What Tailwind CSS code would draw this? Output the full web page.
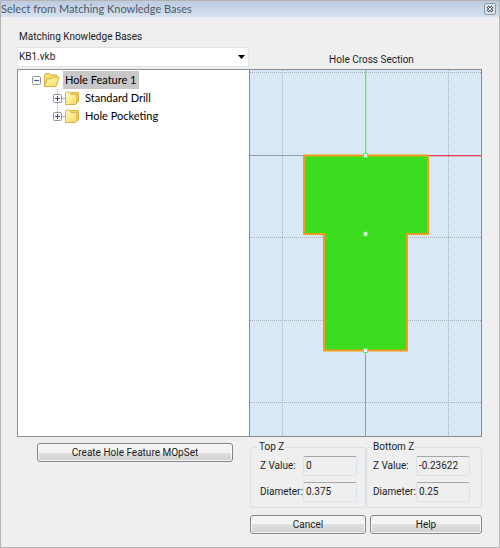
<!DOCTYPE html>
<html lang="en">
<head>
<meta charset="utf-8">
<title>Select from Matching Knowledge Bases</title>
<script src="https://cdn.jsdelivr.net/npm/@tailwindcss/browser@4"></script>
</head>
<body class="bg-[#efefef] text-[#1c1c1c] font-[Roboto,'Liberation_Sans',sans-serif] text-[10px] leading-[14px]">
<svg class="absolute size-0" aria-hidden="true">
  <defs>
    <linearGradient id="gold" x1="0" y1="0" x2="1" y2="1"><stop offset="0" stop-color="#fffac8"/><stop offset="1" stop-color="#f8d85c"/></linearGradient>
    <symbol id="folder" viewBox="0 0 16 16">
      <path d="M7 4.500V2.500h7.500v9l-1.500 1.500" fill="#f4d768" stroke="#d9b24a"/>
      <path d="M1.500 13.500V3l1-1h3l1.500 2.500h6v8.500l-1.500 1.500h-10z" fill="url(#gold)" stroke="#dbb03a"/>
    </symbol>
    <symbol id="folder-open" viewBox="0 0 17 16">
      <path d="M1.500 14V3l1-1.500h4L8 3h5.500v4z" fill="#f7dc72" stroke="#d9b24a"/>
      <path d="M1.500 14.500 4 7l5-.5L10.500 5h5.500l-3 9.500z" fill="url(#gold)" stroke="#dbb03a"/>
    </symbol>
    <symbol id="minus" viewBox="0 0 9 9"><rect x=".5" y=".5" width="8" height="8" rx="1" fill="#f8f8f8" stroke="#959595"/><path d="M2 4.500h5" stroke="#3c50a0"/></symbol>
    <symbol id="plus" viewBox="0 0 9 9"><rect x=".5" y=".5" width="8" height="8" rx="1" fill="#f8f8f8" stroke="#959595"/><path d="M2 4.500h5M4.500 2v5" stroke="#3c50a0"/></symbol>
  </defs>
</svg>
<div class="min-h-screen flex flex-col border border-[#b4b4b4]">
  <header class="h-4 flex items-center justify-between pr-[3px] bg-linear-to-b from-[#bccbdf] to-[#d6e2f0]">
    <h1 class="font-[Lato,'Open_Sans',sans-serif] text-[11px] leading-4 text-[#505a66]">Select from Matching Knowledge Bases</h1>
    <button aria-label="Close" class="block">
      <svg class="block size-3" viewBox="0 0 12 12"><rect x=".5" y=".5" width="11" height="11" rx="1.500" fill="#dce4ee" stroke="#8b97ae"/><path d="m3.500 3.500 5 5m0-5-5 5" stroke="#555b68" stroke-width="3"/><path d="m3.500 3.500 5 5m0-5-5 5" stroke="#fff"/></svg>
    </button>
  </header>

  <main class="flex-1 flex flex-col pl-4 pr-[17px] pt-3 pb-[13px]">
    <div class="grid grid-cols-[232fr_233fr] items-end pb-[2px]">
      <div>
        <label for="kb" class="block pl-[2px] pt-[1px] pb-[3px]">Matching Knowledge Bases</label>
        <div class="relative">
          <select id="kb" class="block appearance-none w-full h-5 pl-[1px] bg-white border border-[#e2e3e8] rounded-none"><option>KB1.vkb</option></select>
          <svg class="absolute right-1 top-2 w-[7px] h-1 pointer-events-none" viewBox="0 0 7 4"><path d="M0 0h7L3.500 4z" fill="#000"/></svg>
        </div>
      </div>
      <h2 id="section-title" class="text-center pl-3">Hole Cross Section</h2>
    </div>

    <div class="flex-1 grid grid-cols-[232fr_233fr]">
      <ul class="bg-white border-y border-l border-[#8c8e94] pl-[14px] pt-[1px] text-[11px] leading-[18px] font-[Lato,'Open_Sans',sans-serif] text-black">
        <li>
          <div class="flex items-center h-[18px]">
            <button aria-label="Collapse"><svg class="block size-[9px]"><use href="#minus"/></svg></button>
            <svg class="block w-[17px] h-4 ml-[2px]"><use href="#folder-open"/></svg>
            <span class="ml-[3px] px-[2px] bg-[#c8c8c8]">Hole Feature 1</span>
          </div>
          <ul class="pl-[21px] bg-[repeating-linear-gradient(to_bottom,#aaa_0_1px,transparent_1px_2px)] bg-size-[1px_27px] bg-position-[25px_0] bg-no-repeat">
            <li class="flex items-center h-[18px]">
              <button aria-label="Expand"><svg class="block size-[9px]"><use href="#plus"/></svg></button>
              <span class="w-[2px] border-t border-dotted border-[#aaa]"></span>
              <svg class="block size-4"><use href="#folder"/></svg>
              <span class="ml-[5px]">Standard Drill</span>
            </li>
            <li class="flex items-center h-[18px]">
              <button aria-label="Expand"><svg class="block size-[9px]"><use href="#plus"/></svg></button>
              <span class="w-[2px] border-t border-dotted border-[#aaa]"></span>
              <svg class="block size-4"><use href="#folder"/></svg>
              <span class="ml-[5px]">Hole Pocketing</span>
            </li>
          </ul>
        </li>
      </ul>
      <div class="relative bg-[#d9e8f7] border border-[#85898f]">
        <svg class="absolute inset-0 size-full" viewBox="250 70 231 366" preserveAspectRatio="xMidYMid slice" role="img" aria-labelledby="section-title" fill="none">
          <path d="M282.500 70v366M448.500 70v366M250 72.500h231M250 237.500h231M250 320.500h231M250 402.500h231" stroke="#a9afb6" stroke-dasharray="1 1"/>
          <rect x="250" y="155" width="54" height="1" fill="#979ca2"/>
          <rect x="365" y="351" width="1" height="85" fill="#979ca2"/>
          <rect x="365" y="70" width="1.300" height="85" fill="#5cf04a"/>
          <rect x="428" y="155" width="54" height="1.300" fill="#e4405a"/>
          <path d="M304 155.500h124v78.500h-21v116.500h-83V234h-20z" fill="#3cdd1e" stroke="#f49a1c" stroke-width="2" stroke-linejoin="round"/>
          <path d="M365.500 160v186" stroke="#8c9a8a" stroke-width="1.200" stroke-dasharray="4 4"/>
          <path d="M363 153h5v5h-5zM363 348h5v5h-5z" fill="#5cf04a"/>
          <path d="M363.500 153.500h4v4h-4zM363.500 232h4v4h-4zM363.500 348.500h4v4h-4z" fill="#fff" stroke="#5cf04a"/>
        </svg>
      </div>
    </div>

    <div class="grid grid-cols-[232fr_233fr] pt-[3px]">
      <div class="pl-5 pr-4 pt-[3px]">
        <button class="block w-full h-[19px] leading-[17px] rounded-[3px] border border-[#858585] bg-linear-to-b from-[#f4f4f4] from-50% via-[#e0e0e0] via-50% to-[#d0d0d0] shadow-[inset_0_0_0_1px_#f8f8f8]">Create Hole Feature MOpSet</button>
      </div>
      <div class="pl-[1px]">
        <div class="grid grid-cols-2">
          <fieldset class="min-w-0 border border-[#d8e0e8] rounded-[3px] pl-[9px] pr-2 pb-[5px]">
            <legend class="-ml-[2px] px-[1px] leading-[14px]">Top Z</legend>
            <div class="grid grid-cols-[1fr_54px] items-center gap-y-[6px] pt-[2px]">
              <label for="tz">Z Value:</label>
              <input id="tz" readonly value="0" class="block w-full h-5 pl-[2px] pb-[2px] border border-t-[#a6a6a6] border-[#dde3ea] rounded-[2px]">
              <label for="td">Diameter:</label>
              <input id="td" readonly value="0.375" class="block w-full h-5 pl-[2px] pb-[2px] border border-t-[#a6a6a6] border-[#dde3ea] rounded-[2px]">
            </div>
          </fieldset>
          <fieldset class="min-w-0 border border-[#d8e0e8] rounded-[3px] pl-[6px] pr-3 pb-[5px]">
            <legend class="px-[1px] -ml-[1px] leading-[14px]">Bottom Z</legend>
            <div class="grid grid-cols-[1fr_54px] items-center gap-y-[6px] pt-[2px]">
              <label for="bz">Z Value:</label>
              <input id="bz" readonly value="-0.23622" class="block w-full h-5 pl-[2px] pb-[2px] border border-t-[#a6a6a6] border-[#dde3ea] rounded-[2px]">
              <label for="bd">Diameter:</label>
              <input id="bd" readonly value="0.25" class="block w-full h-5 pl-[2px] pb-[2px] border border-t-[#a6a6a6] border-[#dde3ea] rounded-[2px]">
            </div>
          </fieldset>
        </div>
        <div class="grid grid-cols-[116fr_112fr] gap-1 pt-[7px]">
          <button class="h-[19px] leading-[17px] rounded-[3px] border border-[#858585] bg-linear-to-b from-[#f4f4f4] from-50% via-[#e0e0e0] via-50% to-[#d0d0d0] shadow-[inset_0_0_0_1px_#f8f8f8]">Cancel</button>
          <button class="h-[19px] leading-[17px] rounded-[3px] border border-[#858585] bg-linear-to-b from-[#f4f4f4] from-50% via-[#e0e0e0] via-50% to-[#d0d0d0] shadow-[inset_0_0_0_1px_#f8f8f8]">Help</button>
        </div>
      </div>
    </div>
  </main>
</div>
</body>
</html>
